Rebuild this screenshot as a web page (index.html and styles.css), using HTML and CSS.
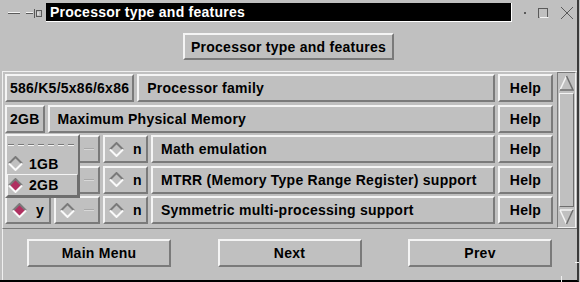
FILE: index.html
```html
<!DOCTYPE html>
<html lang="en">
<head>
    <meta charset="UTF-8">
    <title>Processor type and features</title>
    <link rel="stylesheet" href="styles.css">
</head>
<body>
<div class="window">
    <div class="titlebar">
        <svg class="wm-left" width="46" height="25" viewBox="0 0 46 25">
            <line x1="8" y1="12.5" x2="20" y2="12.5" stroke="#f4f4f4"/>
            <line x1="8" y1="13.5" x2="20" y2="13.5" stroke="#5a5a5a"/>
            <line x1="26" y1="12.5" x2="33" y2="12.5" stroke="#f4f4f4"/>
            <line x1="26" y1="13.5" x2="33" y2="13.5" stroke="#5a5a5a"/>
            <line x1="34.5" y1="9" x2="34.5" y2="18" stroke="#5a5a5a"/>
            <rect x="36.5" y="10.5" width="5" height="6" fill="none" stroke="#5a5a5a"/>
            <line x1="38" y1="12" x2="38" y2="15" stroke="#f4f4f4"/>
        </svg>
        <div class="title">Processor type and features</div>
        <svg class="wm-right" width="65" height="25" viewBox="0 0 65 25">
            <rect x="12" y="12" width="2" height="2" fill="#5a5a5a"/>
            <rect x="26.5" y="8.5" width="9" height="9" fill="none" stroke="#5a5a5a"/>
            <line x1="27.5" y1="17.5" x2="36.5" y2="17.5" stroke="#f4f4f4"/>
            <line x1="49" y1="7" x2="61" y2="19" stroke="#5a5a5a"/>
            <line x1="61" y1="7" x2="49" y2="19" stroke="#5a5a5a"/>
        </svg>
    </div>

    <div class="header">
        <button class="btn head-btn">Processor type and features</button>
    </div>

    <div class="list-frame">
        <div class="rows">
            <div class="row">
                <div class="cell value">586/K5/5x86/6x86</div>
                <div class="cell label">Processor family</div>
                <div class="cell help">Help</div>
            </div>
            <div class="row">
                <div class="cell value">2GB</div>
                <div class="cell label">Maximum Physical Memory</div>
                <div class="cell help">Help</div>
            </div>
            <div class="row">
                <!-- hidden under the popped-up menu -->
                <div class="cell choice covered">
                    <svg class="dia on" width="15" height="15" viewBox="0 0 15 15"><polygon points="7.5,1 14,7.5 7.5,14 1,7.5"/><path class="top" d="M1 7.5 7.5 1 14 7.5"/><path class="bot" d="M1 7.5 7.5 14 14 7.5"/></svg>
                    <span>y</span>
                </div>
                <div class="cell choice">
                    <svg class="dia" width="15" height="15" viewBox="0 0 15 15"><path class="top" d="M1 7.5 7.5 1 14 7.5"/><path class="bot" d="M1 7.5 7.5 14 14 7.5"/></svg>
                    <span class="dash"></span>
                </div>
                <div class="cell choice narrow">
                    <svg class="dia" width="15" height="15" viewBox="0 0 15 15"><path class="top" d="M1 7.5 7.5 1 14 7.5"/><path class="bot" d="M1 7.5 7.5 14 14 7.5"/></svg>
                    <span>n</span>
                </div>
                <div class="cell label">Math emulation</div>
                <div class="cell help">Help</div>
            </div>
            <div class="row">
                <div class="cell choice covered">
                    <svg class="dia on" width="15" height="15" viewBox="0 0 15 15"><polygon points="7.5,1 14,7.5 7.5,14 1,7.5"/><path class="top" d="M1 7.5 7.5 1 14 7.5"/><path class="bot" d="M1 7.5 7.5 14 14 7.5"/></svg>
                    <span>y</span>
                </div>
                <div class="cell choice">
                    <svg class="dia" width="15" height="15" viewBox="0 0 15 15"><path class="top" d="M1 7.5 7.5 1 14 7.5"/><path class="bot" d="M1 7.5 7.5 14 14 7.5"/></svg>
                    <span class="dash"></span>
                </div>
                <div class="cell choice narrow">
                    <svg class="dia" width="15" height="15" viewBox="0 0 15 15"><path class="top" d="M1 7.5 7.5 1 14 7.5"/><path class="bot" d="M1 7.5 7.5 14 14 7.5"/></svg>
                    <span>n</span>
                </div>
                <div class="cell label">MTRR (Memory Type Range Register) support</div>
                <div class="cell help">Help</div>
            </div>
            <div class="row">
                <div class="cell choice">
                    <svg class="dia on" width="15" height="15" viewBox="0 0 15 15"><polygon points="7.5,1 14,7.5 7.5,14 1,7.5"/><path class="top" d="M1 7.5 7.5 1 14 7.5"/><path class="bot" d="M1 7.5 7.5 14 14 7.5"/></svg>
                    <span>y</span>
                </div>
                <div class="cell choice">
                    <svg class="dia" width="15" height="15" viewBox="0 0 15 15"><path class="top" d="M1 7.5 7.5 1 14 7.5"/><path class="bot" d="M1 7.5 7.5 14 14 7.5"/></svg>
                    <span class="dash"></span>
                </div>
                <div class="cell choice narrow">
                    <svg class="dia" width="15" height="15" viewBox="0 0 15 15"><path class="top" d="M1 7.5 7.5 1 14 7.5"/><path class="bot" d="M1 7.5 7.5 14 14 7.5"/></svg>
                    <span>n</span>
                </div>
                <div class="cell label">Symmetric multi-processing support</div>
                <div class="cell help">Help</div>
            </div>
        </div>

        <div class="scrollbar">
            <svg class="arrow" width="15" height="18" viewBox="0 0 15 18">
                <path d="M1 16 7.5 2" stroke="#f4f4f4" stroke-width="1.5" fill="none"/>
                <path d="M7.5 2 14 16 1 16" stroke="#6e6e6e" stroke-width="1.5" fill="none"/>
            </svg>
            <div class="slider"></div>
            <svg class="arrow" width="15" height="18" viewBox="0 0 15 18">
                <path d="M1 2 14 2 M1 2 7.5 16" stroke="#f4f4f4" stroke-width="1.5" fill="none"/>
                <path d="M7.5 16 14 2" stroke="#6e6e6e" stroke-width="1.5" fill="none"/>
            </svg>
        </div>
    </div>

    <div class="footer">
        <button class="btn foot-btn">Main Menu</button>
        <button class="btn foot-btn">Next</button>
        <button class="btn foot-btn">Prev</button>
    </div>

    <!-- option menu popped up over the first rows -->
    <div class="menu">
        <div class="tearoff"></div>
        <div class="menu-item">
            <svg class="dia" width="15" height="15" viewBox="0 0 15 15"><path class="top" d="M1 7.5 7.5 1 14 7.5"/><path class="bot" d="M1 7.5 7.5 14 14 7.5"/></svg>
            <span>1GB</span>
        </div>
        <div class="menu-item active">
            <svg class="dia on" width="15" height="15" viewBox="0 0 15 15"><polygon points="7.5,1 14,7.5 7.5,14 1,7.5"/><path class="top" d="M1 7.5 7.5 1 14 7.5"/><path class="bot" d="M1 7.5 7.5 14 14 7.5"/></svg>
            <span>2GB</span>
        </div>
    </div>

    <span class="grip grip-h"></span>
    <span class="grip grip-v"></span>
</div>
</body>
</html>
```

FILE: styles.css
```css
body {
    margin: 0;
    background-color: #c0c0c0;
    font-family: 'Liberation Sans', Arial, sans-serif;
    font-size: 14px;
    font-weight: bold;
    letter-spacing: 0.25px;
    color: #000;
}
.window {
    position: relative;
    width: 577px;
    height: 280px;
    border-right: 2px solid #3a3a3a;
    border-bottom: 2px solid #000;
    display: flex;
    flex-direction: column;
}
.titlebar {
    display: flex;
    height: 25px;
    flex-shrink: 0;
}
.title {
    width: 461px;
    height: 18px;
    margin-top: 3px;
    padding-left: 4px;
    background-color: #000;
    color: #fff;
    border-right: 1px solid #fff;
    border-bottom: 1px solid #fff;
    line-height: 18px;
    white-space: nowrap;
}
.header {
    display: flex;
    justify-content: center;
    padding-top: 8px;
}
.btn {
    font: inherit;
    letter-spacing: inherit;
    color: #000;
    background-color: #c0c0c0;
    border: 2px solid;
    border-color: #f4f4f4 #7a7a7a #7a7a7a #f4f4f4;
    padding: 0;
    margin: 0;
}
.head-btn {
    height: 27px;
    padding: 0 6px;
}
.list-frame {
    display: flex;
    margin: 11px 0 0 2px;
    height: 156px;
    border-top: 1px solid #f0f0f0;
    border-left: 1px solid #f0f0f0;
    border-bottom: 1px solid #7a7a7a;
}
.rows {
    width: 548px;
    padding: 2px 0 0 2px;
    display: flex;
    flex-direction: column;
    gap: 2.5px;
}
.row {
    display: flex;
    gap: 3px;
    height: 28px;
}
.cell {
    box-sizing: border-box;
    height: 28px;
    display: flex;
    align-items: center;
    border: 2px solid;
    border-color: #f4f4f4 #7a7a7a #7a7a7a #f4f4f4;
    white-space: nowrap;
}
.value {
    padding: 0 3px;
}
.label {
    flex: 1;
    padding-left: 8px;
}
.help {
    width: 55px;
    justify-content: center;
}
.choice {
    width: 46px;
    justify-content: center;
    gap: 9px;
}
.choice.narrow {
    width: 45px;
}
.choice.covered > * {
    visibility: hidden;
}
.dia path {
    fill: none;
    stroke-width: 2;
}
.dia .top {
    stroke: #7a7a7a;
}
.dia .bot {
    stroke: #fafafa;
}
.dia polygon {
    fill: #b03060;
}
.dash {
    width: 10px;
    height: 0;
    border-top: 1px solid #a8a8a8;
    border-bottom: 1px solid #d8d8d8;
}
.scrollbar {
    box-sizing: border-box;
    width: 19px;
    margin-left: 4px;
    padding: 1px;
    border: 1px solid;
    border-color: #7a7a7a #f0f0f0 #f0f0f0 #7a7a7a;
    display: flex;
    flex-direction: column;
}
.arrow {
    flex-shrink: 0;
}
.slider {
    flex: 1;
    margin: 1px 0;
    border: 1px solid;
    border-color: #f4f4f4 #6e6e6e #6e6e6e #f4f4f4;
}
.footer {
    flex: 1;
    display: flex;
    justify-content: space-between;
    align-items: flex-start;
    margin-left: 2px;
    padding: 10px 25px 0 24px;
    border-left: 1px solid #f0f0f0;
}
.foot-btn {
    width: 144px;
    height: 28px;
}
.menu {
    position: absolute;
    left: 5px;
    top: 134px;
    width: 75px;
    box-sizing: border-box;
    background-color: #c0c0c0;
    border: 2px solid;
    border-color: #f4f4f4 #6e6e6e #6e6e6e #f4f4f4;
}
.tearoff {
    height: 2px;
    margin: 8px 2px 7px 1px;
    background:
        repeating-linear-gradient(90deg, #7a7a7a 0 6px, transparent 6px 10px) top / 100% 1px no-repeat,
        repeating-linear-gradient(90deg, #f4f4f4 0 6px, transparent 6px 10px) bottom / 100% 1px no-repeat;
}
.menu-item {
    box-sizing: border-box;
    height: 21px;
    display: flex;
    align-items: center;
    gap: 6px;
    padding-left: 1px;
}
.menu-item.active {
    height: 22px;
    padding-left: 0;
    border: 1px solid;
    border-color: #f4f4f4 #6e6e6e #6e6e6e #f4f4f4;
}
.grip {
    position: absolute;
    background-color: #f0f0f0;
}
.grip-h {
    right: -2px;
    top: 262px;
    width: 4px;
    height: 1px;
}
.grip-v {
    left: 561px;
    bottom: -2px;
    width: 1px;
    height: 6px;
}
```
